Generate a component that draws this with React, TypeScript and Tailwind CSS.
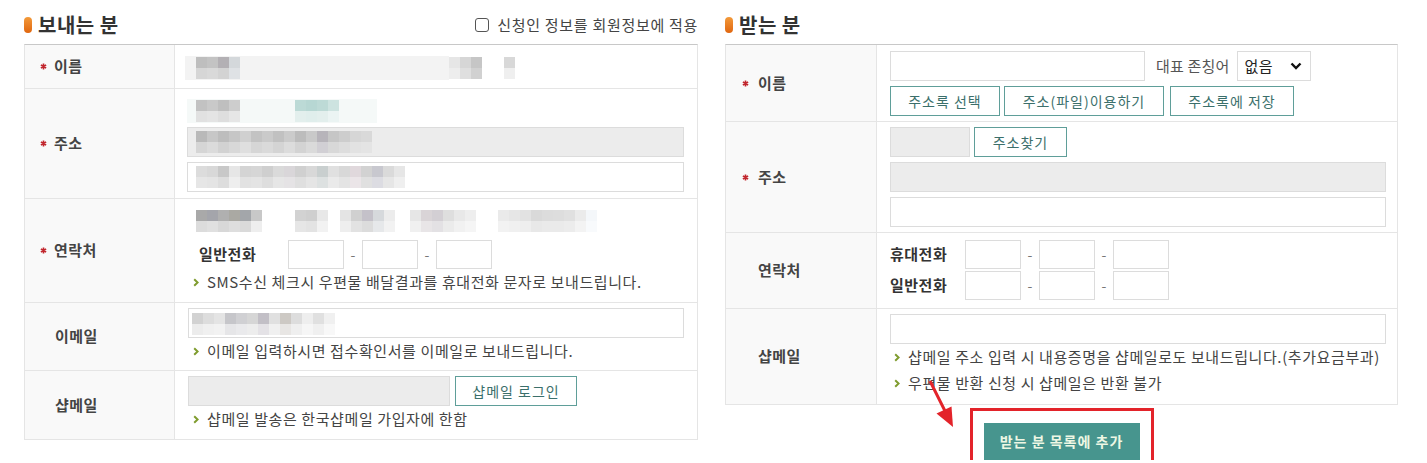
import React from 'react';

type Rows = string[][];

function Mosaic({ rows, cell = 11 }: { rows: Rows; cell?: number }) {
  const cols = rows[0].length;
  return (
    <svg width={cols * cell} height={rows.length * cell} className="shrink-0 block">
      {rows.map((r, i) =>
        r.map((c, j) => <rect key={i + '-' + j} x={j * cell} y={i * cell} width={cell} height={cell} fill={c} />)
      )}
    </svg>
  );
}

function Chevron() {
  return (
    <svg width="6" height="9" viewBox="0 0 6 9" className="shrink-0">
      <path d="M1.2 1.3 L4.6 4.5 L1.2 7.7" stroke="#7f9c2e" strokeWidth="2" fill="none" />
    </svg>
  );
}

function Star() {
  return (
    <svg width="7" height="7" viewBox="0 0 7 7" className="shrink-0">
      <path d="M3.5 0.5 V6.5 M0.9 2 L6.1 5 M0.9 5 L6.1 2" stroke="#c1262d" strokeWidth="1.6" />
    </svg>
  );
}

function Note({ children, pl }: { children: React.ReactNode; pl: string }) {
  return (
    <div className={'flex items-center h-[26px] text-[15px] text-[#444] tracking-[0.6px] ' + pl}>
      <Chevron />
      <span className="ml-[8px] whitespace-nowrap">{children}</span>
    </div>
  );
}

function Label({ text, req, pl, slot, h }: { text: string; req?: boolean; pl: string; slot: string; h?: string }) {
  return (
    <div className={'shrink-0 bg-[#f9f9f9] border-r border-[#e5e5e5] flex items-center ' + pl + ' ' + (h ?? '')}>
      <span className={'flex items-center ' + slot}>{req ? <Star /> : null}</span>
      <span className="font-bold text-[15px] text-[#444] tracking-[0.5px]">{text}</span>
    </div>
  );
}

function Title({ text }: { text: string }) {
  return (
    <div className="flex items-center">
      <span className="w-[8px] h-[16px] rounded-full bg-[linear-gradient(180deg,#f39a3a,#e0660f)]" />
      <span className="ml-[6px] text-[20px] font-bold text-[#333] tracking-[0.5px]">{text}</span>
    </div>
  );
}

function TealBtn({ text, w }: { text: string; w: string }) {
  return (
    <div className={'h-[30px] border border-[#5f9e99] bg-white flex items-center justify-center text-[14px] text-[#3b6f6b] tracking-[1px] ' + w}>
      {text}
    </div>
  );
}

const nameA: Rows = [
  ['#bebebe', '#c3c3c3', '#b3b0b4', '#d4d8db'],
  ['#d6d6d6', '#d9d9d9', '#d3d3d3', '#dfe2e5'],
];
const nameB: Rows = [
  ['#e6e6e6', '#d6d6d6', '#c6c6c6'],
  ['#ededed', '#dfdfdf', '#d1d1d1'],
];
const nameC: Rows = [['#d8d8d8'], ['#efefef']];

const addrA: Rows = [
  ['#c2c2c2', '#c9c9c9', '#bfbfbf', '#cdcdcd'],
  ['#e1e1e1', '#e4e4e4', '#dedede', '#e6e6e6'],
];
const addrT: Rows = [
  ['#bcdad6', '#b7d7d3', '#bddad6', '#cde3e0'],
  ['#e3efed', '#e0eeec', '#e3efed', '#ebf4f3'],
];
const addrG: Rows = [
  ['#b9b9b9', '#c7c7c7', '#bdbdbd', '#c6c6c6', '#d0d0d0', '#c3c3c3', '#cacaca', '#c1c1c1', '#cbcbcb', '#bcbcbc', '#c9c9c9', '#b7b4ba', '#c6c6c6', '#cdcdcd', '#d6d6d6', '#d9d9d9'],
  ['#d5d5d5', '#dbdbdb', '#d2d2d2', '#d8d8d8', '#dfdfdf', '#d6d6d6', '#dadada', '#d4d4d4', '#dcdcdc', '#d3d3d3', '#dadada', '#d1cfd4', '#d8d8d8', '#dddddd', '#e2e2e2', '#e4e4e4'],
];
const addrW: Rows = [
  ['#dcdcdc', '#d8d8d8', '#c8c8c8', '#e6e6e6', '#d4d4d4', '#d6d6d6', '#cfcfcf', '#dadada', '#d9d6d9', '#d0d0d0', '#d8d8d8', '#c9cfcf', '#e0e0e0', '#d8d8d8', '#e0d8dc', '#d2d2d2', '#c8c8cf', '#dadada', '#e6e6e6'],
  ['#e6e6e6', '#e4e4e4', '#dddddd', '#eeeeee', '#e2e2e2', '#e4e4e4', '#dedede', '#e6e6e6', '#e5e3e5', '#dfdfdf', '#e5e5e5', '#dde1e1', '#eaeaea', '#e4e4e4', '#ebe5e8', '#e0e0e0', '#dcdce2', '#e6e6e6', '#efefef'],
];
const telA: Rows = [
  ['#a9a9a9', '#a4a5ab', '#b0b0b0', '#aaa9a3', '#a3a6aa', '#c8c8c8'],
  ['#dcdcdc', '#e0e0e0', '#d8d8d8', '#dedede', '#dadada', '#eeeeee'],
];
const telB: Rows = [
  ['#d2d2d2', '#cfcfcf', '#e8e8e8'],
  ['#e6e6e6', '#e3e3e3', '#f2f2f2'],
];
const telC: Rows = [
  ['#e4e4e4', '#d0d0d0', '#c4c1c9', '#d6d9dc', '#ececec'],
  ['#eeeeee', '#e2e2e2', '#dcdcdc', '#e6e8ea', '#f2f2f2'],
];
const telD: Rows = [
  ['#e6e6e6', '#d9d4d7', '#d3cfd4', '#dedede', '#e8e8e8', '#eeeeee'],
  ['#f0f0f0', '#e8e5e7', '#e3e1e4', '#ebebeb', '#f1f1f1', '#f5f5f5'],
];
const telE: Rows = [
  ['#eaeaea', '#e6e6e6', '#e2e2e2', '#d9d9d9', '#dcdcdc', '#dddddd', '#e0e0e0', '#ebebeb', '#f4f7fa'],
  ['#f2f2f2', '#f0f0f0', '#eeeeee', '#e8e8e8', '#eaeaea', '#eaeaea', '#ececec', '#f3f3f3', '#f8fafc'],
];
const mailA: Rows = [
  ['#d2d2d2', '#dddddd', '#e4e4e4', '#c6c6ca', '#d0d0d3', '#d6d6d6', '#c2bfc6', '#e0e0e0', '#cdc9c4', '#dddddd', '#eeeeee', '#e0e0e0', '#f0f0f0'],
  ['#ececec', '#f0f0f0', '#f2f2f2', '#e6e6e8', '#eaeaec', '#ededed', '#e4e2e6', '#f0f0f0', '#e8e6e4', '#efefef', '#f6f6f6', '#f0f0f0', '#f8f8f8'],
];

function PhoneInputs() {
  return (
    <div className="flex items-center">
      <div className="w-[56px] h-[29px] border border-[#dcdcdc] bg-white" />
      <span className="w-[18px] text-center text-[#777] text-[14px]">-</span>
      <div className="w-[56px] h-[29px] border border-[#dcdcdc] bg-white" />
      <span className="w-[18px] text-center text-[#777] text-[14px]">-</span>
      <div className="w-[56px] h-[29px] border border-[#dcdcdc] bg-white" />
    </div>
  );
}

function Sender() {
  return (
    <div className="w-[674px] shrink-0">
      <div className="h-[38px] mt-[6px] flex items-center justify-between">
        <Title text="보내는 분" />
        <div className="flex items-center text-[15px] text-[#444] tracking-[0.7px]">
          <span className="w-[14px] h-[14px] border-[1.5px] border-[#555] rounded-[3px] bg-white" />
          <span className="ml-[8px]">신청인 정보를 회원정보에 적용</span>
        </div>
      </div>
      <div className="border-t border-[#c8c8c8] border-x border-x-[#e5e5e5]">
        {/* 이름 */}
        <div className="flex h-[44px] border-b border-[#e5e5e5]">
          <Label text="이름" req pl="pl-[15px]" slot="w-[14px]" h="w-[150px]" />
          <div className="flex-1 pl-[10px] pt-[11px]">
            <div className="flex items-center h-[24px]">
              <div className="flex items-center h-[24px] w-[264px] bg-[#f3f3f3] pl-[11px]">
                <Mosaic rows={nameA} />
              </div>
              <Mosaic rows={nameB} />
              <div className="w-[22px]" />
              <Mosaic rows={nameC} />
            </div>
          </div>
        </div>
        {/* 주소 */}
        <div className="flex h-[110px] border-b border-[#e5e5e5]">
          <Label text="주소" req pl="pl-[15px]" slot="w-[14px]" h="w-[150px]" />
          <div className="flex-1 pl-[12px] pr-[13px] pt-[10px] flex flex-col">
            <div className="flex items-center h-[24px] w-[190px] bg-[#f5f9f8] pl-[9px]">
              <Mosaic rows={addrA} />
              <div className="w-[55px]" />
              <Mosaic rows={addrT} />
            </div>
            <div className="mt-[4px] h-[30px] border border-[#dcdcdc] bg-[#ececec] flex items-center pl-[8px]">
              <Mosaic rows={addrG} />
            </div>
            <div className="mt-[5px] h-[30px] border border-[#dcdcdc] bg-white flex items-center pl-[8px]">
              <Mosaic rows={addrW} />
            </div>
          </div>
        </div>
        {/* 연락처 */}
        <div className="flex h-[104px] border-b border-[#e5e5e5]">
          <Label text="연락처" req pl="pl-[15px]" slot="w-[14px]" h="w-[150px]" />
          <div className="flex-1 pl-[12px] pt-[10px] flex flex-col">
            <div className="flex items-center h-[24px] pl-[9px]">
              <Mosaic rows={telA} />
              <div className="w-[33px]" />
              <Mosaic rows={telB} />
              <div className="w-[12px]" />
              <Mosaic rows={telC} />
              <div className="w-[15px]" />
              <Mosaic rows={telD} />
              <div className="w-[22px]" />
              <Mosaic rows={telE} />
            </div>
            <div className="mt-[7px] flex items-center h-[29px]">
              <span className="ml-[12px] w-[89px] font-bold text-[15px] text-[#333] tracking-[0.5px]">일반전화</span>
              <PhoneInputs />
            </div>
            <Note pl="pl-[6px]">SMS수신 체크시 우편물 배달결과를 휴대전화 문자로 보내드립니다.</Note>
          </div>
        </div>
        {/* 이메일 */}
        <div className="flex h-[68px] border-b border-[#e5e5e5]">
          <Label text="이메일" pl="pl-[16px]" slot="w-[14px]" h="w-[150px]" />
          <div className="flex-1 pl-[13px] pr-[13px] pt-[5px] flex flex-col">
            <div className="h-[30px] border border-[#dcdcdc] bg-white flex pt-[4px] pl-[3px]">
              <Mosaic rows={mailA} />
            </div>
            <Note pl="pl-[5px]">이메일 입력하시면 접수확인서를 이메일로 보내드립니다.</Note>
          </div>
        </div>
        {/* 샵메일 */}
        <div className="flex h-[69px] border-b border-[#e5e5e5]">
          <Label text="샵메일" pl="pl-[16px]" slot="w-[14px]" h="w-[150px]" />
          <div className="flex-1 pl-[13px] pt-[5px] flex flex-col">
            <div className="flex items-center gap-[5px]">
              <div className="w-[262px] h-[30px] border border-[#dcdcdc] bg-[#ececec]" />
              <TealBtn text="샵메일 로그인" w="w-[122px]" />
            </div>
            <Note pl="pl-[5px]">샵메일 발송은 한국샵메일 가입자에 한함</Note>
          </div>
        </div>
      </div>
    </div>
  );
}

function Receiver() {
  return (
    <div className="w-[673px] shrink-0">
      <div className="h-[38px] mt-[6px] flex items-center">
        <Title text="받는 분" />
      </div>
      <div className="border-t border-[#c8c8c8] border-x border-x-[#e5e5e5]">
        {/* 이름 */}
        <div className="flex h-[77px] border-b border-[#e5e5e5]">
          <Label text="이름" req pl="pl-[16px]" slot="w-[16px]" h="w-[151px]" />
          <div className="flex-1 pl-[13px] pt-[6px] flex flex-col">
            <div className="flex items-center">
              <div className="w-[255px] h-[30px] border border-[#dcdcdc] bg-white" />
              <span className="ml-[11px] text-[15px] text-[#555] tracking-[0.2px]">대표 존칭어</span>
              <div className="ml-[7px] w-[74px] h-[30px] border border-[#dcdcdc] bg-white flex items-center justify-between pl-[7px] pr-[8px]">
                <span className="text-[15px] text-[#222] tracking-[0.5px]">없음</span>
                <svg width="12" height="8" viewBox="0 0 12 8">
                  <path d="M1.5 1.5 L6 6 L10.5 1.5" stroke="#111" strokeWidth="2.4" fill="none" />
                </svg>
              </div>
            </div>
            <div className="mt-[5px] flex items-center">
              <TealBtn text="주소록 선택" w="w-[110px]" />
              <div className="w-[4px]" />
              <TealBtn text="주소(파일)이용하기" w="w-[160px]" />
              <div className="w-[6px]" />
              <TealBtn text="주소록에 저장" w="w-[124px]" />
            </div>
          </div>
        </div>
        {/* 주소 */}
        <div className="flex h-[111px] border-b border-[#e5e5e5]">
          <Label text="주소" req pl="pl-[16px]" slot="w-[16px]" h="w-[151px]" />
          <div className="flex-1 pl-[13px] pr-[11px] pt-[5px] flex flex-col">
            <div className="flex items-center gap-[4px]">
              <div className="w-[80px] h-[30px] border border-[#dcdcdc] bg-[#ececec]" />
              <TealBtn text="주소찾기" w="w-[93px]" />
            </div>
            <div className="mt-[5px] h-[30px] border border-[#dcdcdc] bg-[#ececec]" />
            <div className="mt-[5px] h-[30px] border border-[#dcdcdc] bg-white" />
          </div>
        </div>
        {/* 연락처 */}
        <div className="flex h-[76px] border-b border-[#e5e5e5]">
          <Label text="연락처" pl="pl-[16px]" slot="w-[16px]" h="w-[151px]" />
          <div className="flex-1 pl-[13px] pt-[7px] flex flex-col gap-[2px]">
            <div className="flex items-center h-[29px]">
              <span className="w-[75px] font-bold text-[15px] text-[#333] tracking-[0.5px]">휴대전화</span>
              <PhoneInputs />
            </div>
            <div className="flex items-center h-[29px]">
              <span className="w-[75px] font-bold text-[15px] text-[#333] tracking-[0.5px]">일반전화</span>
              <PhoneInputs />
            </div>
          </div>
        </div>
        {/* 샵메일 */}
        <div className="flex h-[96px] border-b border-[#e5e5e5]">
          <Label text="샵메일" pl="pl-[16px]" slot="w-[16px]" h="w-[151px]" />
          <div className="flex-1 pl-[13px] pr-[11px] pt-[5px] flex flex-col">
            <div className="h-[30px] border border-[#dcdcdc] bg-white" />
            <Note pl="pl-[4px]">샵메일 주소 입력 시 내용증명을 샵메일로도 보내드립니다.(추가요금부과)</Note>
            <Note pl="pl-[4px]">우편물 반환 신청 시 샵메일은 반환 불가</Note>
          </div>
        </div>
      </div>
      <div className="flex justify-center mt-[3px]">
        <div className="border-[3px] border-b-0 border-[#e3232a] pt-[12px] px-[11px]">
          <div className="w-[156px] h-[37px] bg-[#47958e] flex items-center justify-center text-[14px] font-bold text-[#eef7e4] tracking-[1px]">
            받는 분 목록에 추가
          </div>
        </div>
      </div>
    </div>
  );
}

export default function App() {
  return (
    <div className="relative w-[1427px] h-[463px] overflow-hidden bg-white font-['Noto_Sans_CJK_KR','Noto_Sans',sans-serif]">
      <div className="flex pl-[24px] gap-[27px]">
        <Sender />
        <Receiver />
      </div>
      <svg className="absolute left-0 top-0 pointer-events-none" width="1427" height="463">
        <line x1="930" y1="381" x2="945" y2="411" stroke="#e3232a" strokeWidth="3" />
        <polygon points="953,427 936.5,413.5 951.5,406.5" fill="#e3232a" />
      </svg>
    </div>
  );
}
